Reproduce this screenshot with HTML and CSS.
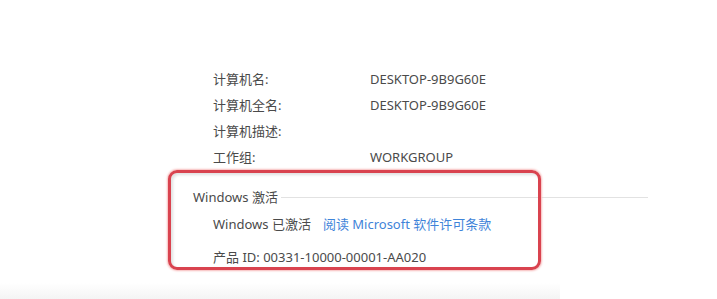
FILE: index.html
```html
<!DOCTYPE html>
<html lang="zh-CN">
<head>
  <meta charset="UTF-8">
  <title>系统</title>
  <link rel="stylesheet" href="styles.css">
</head>
<body>

<div class="sheet">
  <div class="info">
    <div class="row">
      <span class="label">计算机名:</span>
      <span class="value">DESKTOP-9B9G60E</span>
    </div>
    <div class="row">
      <span class="label">计算机全名:</span>
      <span class="value">DESKTOP-9B9G60E</span>
    </div>
    <div class="row">
      <span class="label">计算机描述:</span>
      <span class="value"></span>
    </div>
    <div class="row">
      <span class="label">工作组:</span>
      <span class="value">WORKGROUP</span>
    </div>
  </div>

  <div class="group">
    <div class="highlight"></div>
    <div class="group-title">
      <span>Windows 激活</span>
      <div class="rule"></div>
    </div>
    <div class="row status">
      Windows 已激活<a href="#" class="link">阅读 Microsoft 软件许可条款</a>
    </div>
    <div class="row product">产品 ID: 00331-10000-00001-AA020</div>
  </div>

  <div class="shade"></div>
</div>

</body>
</html>
```

FILE: styles.css
```css
* {
  box-sizing: border-box;
}

body {
  margin: 0;
  background: #fff;
  font-family: "Noto Sans", "Noto Sans CJK SC", sans-serif;
  font-size: 13px;
  color: #4a4a4a;
}

.sheet {
  padding-top: 66px;
}

.info {
  margin-left: 213px;
}

.row {
  display: flex;
  height: 26px;
  line-height: 26px;
  white-space: nowrap;
}

.label {
  width: 157px;
}

/* activation group, boxed in red */
.group {
  position: relative;
  margin-left: 193px;
  width: 455px;
  padding-top: 13px;
}

.highlight {
  position: absolute;
  left: -25px;
  top: 0;
  width: 373px;
  height: 100px;
  border: 3px solid #d9434f;
  border-radius: 9px;
  box-shadow: 0 0 2px 1px #f7b9b9, inset 2px 2px 3px rgba(0,0,0,0.12);
}

.group-title {
  display: flex;
  align-items: center;
  height: 26px;
  margin-bottom: 2px;
}

.rule {
  flex: 1;
  height: 1px;
  margin: 2px 0 0 3px;
  background: #e2e2e2;
}

.group .row {
  padding-left: 20px;
}

.link {
  margin-left: 12px;
  color: #3f84d9;
  text-decoration: none;
}

.product {
  margin-top: 7px;
}

.shade {
  margin-top: 13px;
  width: 560px;
  height: 16px;
  background: linear-gradient(to bottom, #fff, #f4f4f4);
}
```
